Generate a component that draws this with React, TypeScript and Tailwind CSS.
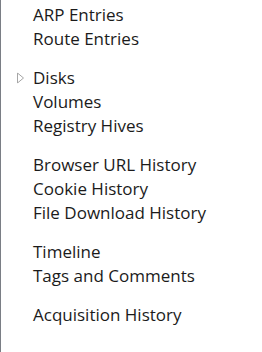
import React from 'react';

const groups: string[][] = [
  ['ARP Entries', 'Route Entries'],
  ['Disks', 'Volumes', 'Registry Hives'],
  ['Browser URL History', 'Cookie History', 'File Download History'],
  ['Timeline', 'Tags and Comments'],
  ['Acquisition History'],
];

const Expander = () => (
  <svg width="8" height="11" viewBox="0 0 8 11" className="absolute left-[16px] top-1/2 -translate-y-1/2">
    <path d="M0.5 0.5 L6.5 5.5 L0.5 10.5 Z" fill="white" stroke="#a6a6a6" strokeWidth="1" />
  </svg>
);

const App: React.FC = () => {
  return (
    <div className="h-[352px] w-[262px] bg-white border-l border-[#7a7e85] pt-[3px]" style={{ fontFamily: '"Open Sans", "Noto Sans", sans-serif' }}>
      <div className="flex flex-col gap-[15px]">
        {groups.map((group, gi) => (
          <div key={gi} className="flex flex-col">
            {group.map(item => (
              <div key={item} className="relative h-6 flex items-center pl-[32px] text-[17px] text-[#1b1b1b] whitespace-nowrap">
                {item === 'Disks' && <Expander />}
                {item}
              </div>
            ))}
          </div>
        ))}
      </div>
    </div>
  );
};

export default App;
